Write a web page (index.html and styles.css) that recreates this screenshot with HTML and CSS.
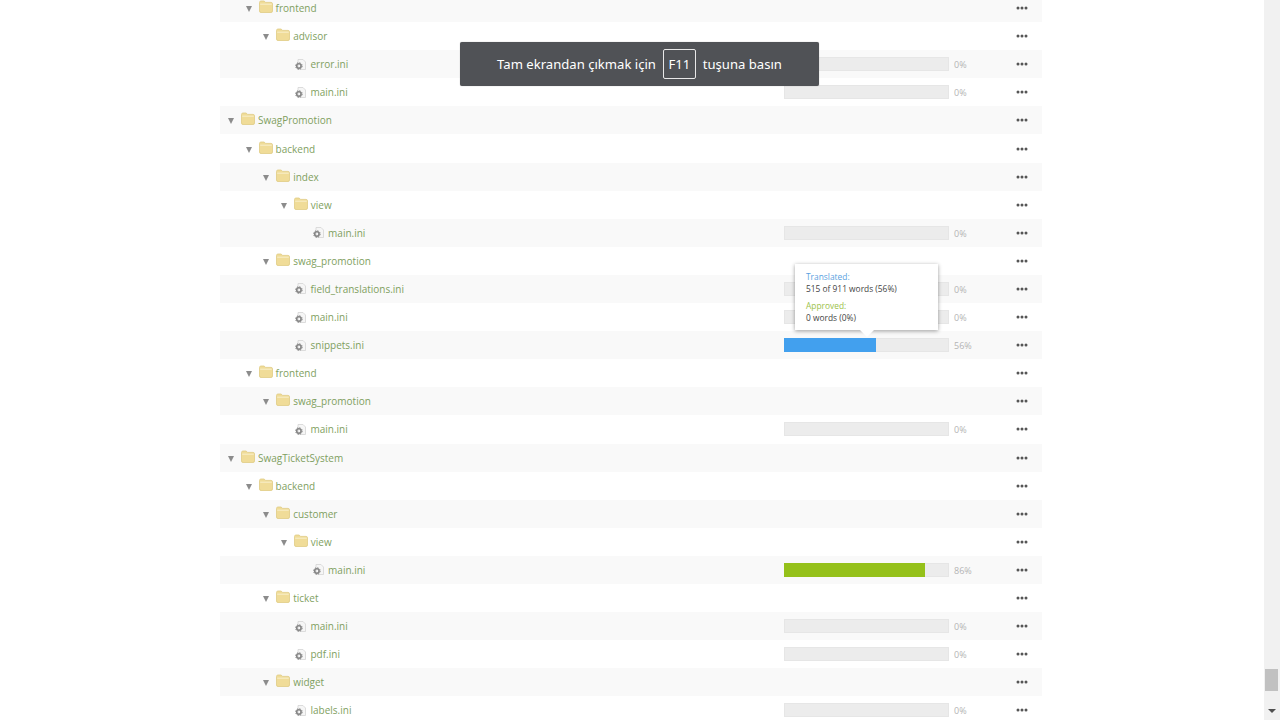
FILE: index.html
```html
<!DOCTYPE html>
<html lang="tr">
<head>
<meta charset="utf-8">
<title>Files</title>
<link rel="stylesheet" href="styles.css">
</head>
<body>
<svg class="defs" width="0" height="0" aria-hidden="true">
  <symbol id="i-folder" viewBox="0 0 14 13">
    <path d="M0.5 2.5 Q0.5 1 2 1 H5.2 L6.4 2.4 H12 Q13.5 2.4 13.5 3.9 V11 Q13.5 12.5 12 12.5 H2 Q0.5 12.5 0.5 11 Z" fill="#f0dc98" stroke="#e0cc84" stroke-width=".8"/>
    <path d="M1.2 4.2 H12.8" stroke="#f8efcb" stroke-width="1"/>
  </symbol>
  <symbol id="i-file" viewBox="0 0 11 11">
    <path d="M3 .5 H8 L10.5 3 V10.5 H3 Z" fill="#f6f6f6" stroke="#d4d4d4" stroke-width=".8"/>
    <circle cx="3.9" cy="7" r="2.2" fill="none" stroke="#858585" stroke-width="1.6"/>
    <circle cx="3.9" cy="7" r="3.3" fill="none" stroke="#858585" stroke-width="1" stroke-dasharray="1.3 1.3"/>
  </symbol>
  <symbol id="i-dots" viewBox="0 0 12 4">
    <circle cx="2" cy="2" r="1.5"/><circle cx="6" cy="2" r="1.5"/><circle cx="10" cy="2" r="1.5"/>
  </symbol>
</svg>

<div class="window">
  <main class="page">
    <ul class="tree">
      <li class="row l1"><i class="caret"></i><svg class="folder"><use href="#i-folder"/></svg><span class="name">frontend</span><svg class="dots"><use href="#i-dots"/></svg></li>
      <li class="row l2"><i class="caret"></i><svg class="folder"><use href="#i-folder"/></svg><span class="name">advisor</span><svg class="dots"><use href="#i-dots"/></svg></li>
      <li class="row l3 file"><svg class="fileicon"><use href="#i-file"/></svg><span class="name">error.ini</span><span class="bar"></span><span class="pct">0%</span><svg class="dots"><use href="#i-dots"/></svg></li>
      <li class="row l3 file"><svg class="fileicon"><use href="#i-file"/></svg><span class="name">main.ini</span><span class="bar"></span><span class="pct">0%</span><svg class="dots"><use href="#i-dots"/></svg></li>
      <li class="row l0"><i class="caret"></i><svg class="folder"><use href="#i-folder"/></svg><span class="name">SwagPromotion</span><svg class="dots"><use href="#i-dots"/></svg></li>
      <li class="row l1"><i class="caret"></i><svg class="folder"><use href="#i-folder"/></svg><span class="name">backend</span><svg class="dots"><use href="#i-dots"/></svg></li>
      <li class="row l2"><i class="caret"></i><svg class="folder"><use href="#i-folder"/></svg><span class="name">index</span><svg class="dots"><use href="#i-dots"/></svg></li>
      <li class="row l3"><i class="caret"></i><svg class="folder"><use href="#i-folder"/></svg><span class="name">view</span><svg class="dots"><use href="#i-dots"/></svg></li>
      <li class="row l4 file"><svg class="fileicon"><use href="#i-file"/></svg><span class="name">main.ini</span><span class="bar"></span><span class="pct">0%</span><svg class="dots"><use href="#i-dots"/></svg></li>
      <li class="row l2"><i class="caret"></i><svg class="folder"><use href="#i-folder"/></svg><span class="name">swag_promotion</span><svg class="dots"><use href="#i-dots"/></svg></li>
      <li class="row l3 file"><svg class="fileicon"><use href="#i-file"/></svg><span class="name">field_translations.ini</span><span class="bar"></span><span class="pct">0%</span><svg class="dots"><use href="#i-dots"/></svg></li>
      <li class="row l3 file"><svg class="fileicon"><use href="#i-file"/></svg><span class="name">main.ini</span><span class="bar"></span><span class="pct">0%</span><svg class="dots"><use href="#i-dots"/></svg></li>
      <li class="row l3 file"><svg class="fileicon"><use href="#i-file"/></svg><span class="name">snippets.ini</span><span class="bar"><span class="fill blue" style="width:56%"></span></span><span class="pct">56%</span><svg class="dots"><use href="#i-dots"/></svg></li>
      <li class="row l1"><i class="caret"></i><svg class="folder"><use href="#i-folder"/></svg><span class="name">frontend</span><svg class="dots"><use href="#i-dots"/></svg></li>
      <li class="row l2"><i class="caret"></i><svg class="folder"><use href="#i-folder"/></svg><span class="name">swag_promotion</span><svg class="dots"><use href="#i-dots"/></svg></li>
      <li class="row l3 file"><svg class="fileicon"><use href="#i-file"/></svg><span class="name">main.ini</span><span class="bar"></span><span class="pct">0%</span><svg class="dots"><use href="#i-dots"/></svg></li>
      <li class="row l0"><i class="caret"></i><svg class="folder"><use href="#i-folder"/></svg><span class="name">SwagTicketSystem</span><svg class="dots"><use href="#i-dots"/></svg></li>
      <li class="row l1"><i class="caret"></i><svg class="folder"><use href="#i-folder"/></svg><span class="name">backend</span><svg class="dots"><use href="#i-dots"/></svg></li>
      <li class="row l2"><i class="caret"></i><svg class="folder"><use href="#i-folder"/></svg><span class="name">customer</span><svg class="dots"><use href="#i-dots"/></svg></li>
      <li class="row l3"><i class="caret"></i><svg class="folder"><use href="#i-folder"/></svg><span class="name">view</span><svg class="dots"><use href="#i-dots"/></svg></li>
      <li class="row l4 file"><svg class="fileicon"><use href="#i-file"/></svg><span class="name">main.ini</span><span class="bar"><span class="fill green" style="width:85.6%"></span></span><span class="pct">86%</span><svg class="dots"><use href="#i-dots"/></svg></li>
      <li class="row l2"><i class="caret"></i><svg class="folder"><use href="#i-folder"/></svg><span class="name">ticket</span><svg class="dots"><use href="#i-dots"/></svg></li>
      <li class="row l3 file"><svg class="fileicon"><use href="#i-file"/></svg><span class="name">main.ini</span><span class="bar"></span><span class="pct">0%</span><svg class="dots"><use href="#i-dots"/></svg></li>
      <li class="row l3 file"><svg class="fileicon"><use href="#i-file"/></svg><span class="name">pdf.ini</span><span class="bar"></span><span class="pct">0%</span><svg class="dots"><use href="#i-dots"/></svg></li>
      <li class="row l2"><i class="caret"></i><svg class="folder"><use href="#i-folder"/></svg><span class="name">widget</span><svg class="dots"><use href="#i-dots"/></svg></li>
      <li class="row l3 file"><svg class="fileicon"><use href="#i-file"/></svg><span class="name">labels.ini</span><span class="bar"></span><span class="pct">0%</span><svg class="dots"><use href="#i-dots"/></svg></li>
    </ul>
  </main>
  <aside class="scrollbar"><span class="thumb"></span><i class="scroll-arrow"></i></aside>
</div>

<div class="tooltip">
  <p class="tip-label tip-blue">Translated:</p>
  <p class="tip-value">515 of 911 words (56%)</p>
  <p class="tip-label tip-green">Approved:</p>
  <p class="tip-value">0 words (0%)</p>
</div>

<div class="toast">Tam ekrandan çıkmak için <kbd class="key">F11</kbd> tuşuna basın</div>
</body>
</html>
```
FILE: styles.css
```css
* { box-sizing: border-box; }
html, body { margin: 0; height: 100%; overflow: hidden; }
body { background: #fff; font-family: "Open Sans", sans-serif; position: relative; }
.defs { position: absolute; }
.window { display: flex; height: 720px; }
.page { flex: 1; min-width: 0; overflow: hidden; padding-left: 220px; }
.tree { list-style: none; margin: -6px 0 0; padding: 0; width: 822px; }
.row {
  display: flex; align-items: center; height: 28.1px; position: relative;
  font-size: 10px; color: #7f9f5f;
}
.row:nth-child(odd) { background: #f9f9f9; }
.l0 { padding-left: 8px; }
.l1 { padding-left: 25.6px; }
.l2 { padding-left: 43.2px; }
.l3 { padding-left: 60.8px; }
.l4 { padding-left: 78.4px; }
.file.l3 { padding-left: 75px; }
.file.l4 { padding-left: 92.6px; }
.caret {
  width: 0; height: 0; margin-right: 7px; margin-top: 2px;
  border-left: 3.5px solid transparent; border-right: 3.5px solid transparent;
  border-top: 6px solid #8c8c8c;
}
.folder { width: 14px; height: 13px; margin-right: 3px; margin-top: -3px; flex: none; }
.fileicon { width: 11px; height: 11px; margin-right: 4.5px; flex: none; }
.name { flex: none; }
.bar {
  position: absolute; left: 564px; width: 165px; height: 14px; display: block;
  background: #ececec; box-shadow: inset 0 0 0 1px #e6e6e6;
}
.fill { display: block; height: 100%; }
.blue { background: #42a0ee; }
.green { background: #95c11a; }
.pct { position: absolute; left: 734px; top: 8px; font-size: 9px; color: #b4b4b4; }
.dots { position: absolute; left: 796px; width: 12px; height: 4px; fill: #555; }
.scrollbar { width: 16px; background: #f1f1f1; position: relative; flex: none; }
.thumb { position: absolute; left: 1px; right: 2px; top: 669px; height: 22px; background: #c1c1c1; }
.scroll-arrow {
  position: absolute; left: 4px; top: 709px; width: 0; height: 0;
  border-left: 4px solid transparent; border-right: 4px solid transparent; border-top: 4px solid #505050;
}
.tooltip {
  position: absolute; left: 795px; top: 264px; width: 143px; height: 66px;
  background: #fff; padding: 7px 11px; box-shadow: 0 1px 4px rgba(0,0,0,.4);
  font-size: 8.4px; line-height: 11.5px;
}
.tooltip::after {
  content: ""; position: absolute; left: 65px; bottom: -7px; width: 0; height: 0;
  border-left: 7px solid transparent; border-right: 7px solid transparent; border-top: 7px solid #fff;
}
.tip-label, .tip-value { margin: 0; }
.tip-value { color: #444; margin-bottom: 6px; }
.tip-blue { color: #5a9fe0; }
.tip-green { color: #9cc24a; }
.toast {
  position: absolute; left: 460px; top: 42px; width: 359px; height: 44px;
  background: #505256; border-radius: 2px; color: #fff;
  font-family: "Noto Sans", "Open Sans", sans-serif; font-size: 13.1px;
  display: flex; align-items: center; justify-content: center; gap: 3.5px; white-space: pre;
  box-shadow: 0 0 1px rgba(0,0,0,.4); padding-bottom: 1px;
}
.key {
  font: inherit; border: 1px solid #e8e8e8; border-radius: 2px;
  width: 33px; height: 30px; display: flex; align-items: center; justify-content: center;
}
```
